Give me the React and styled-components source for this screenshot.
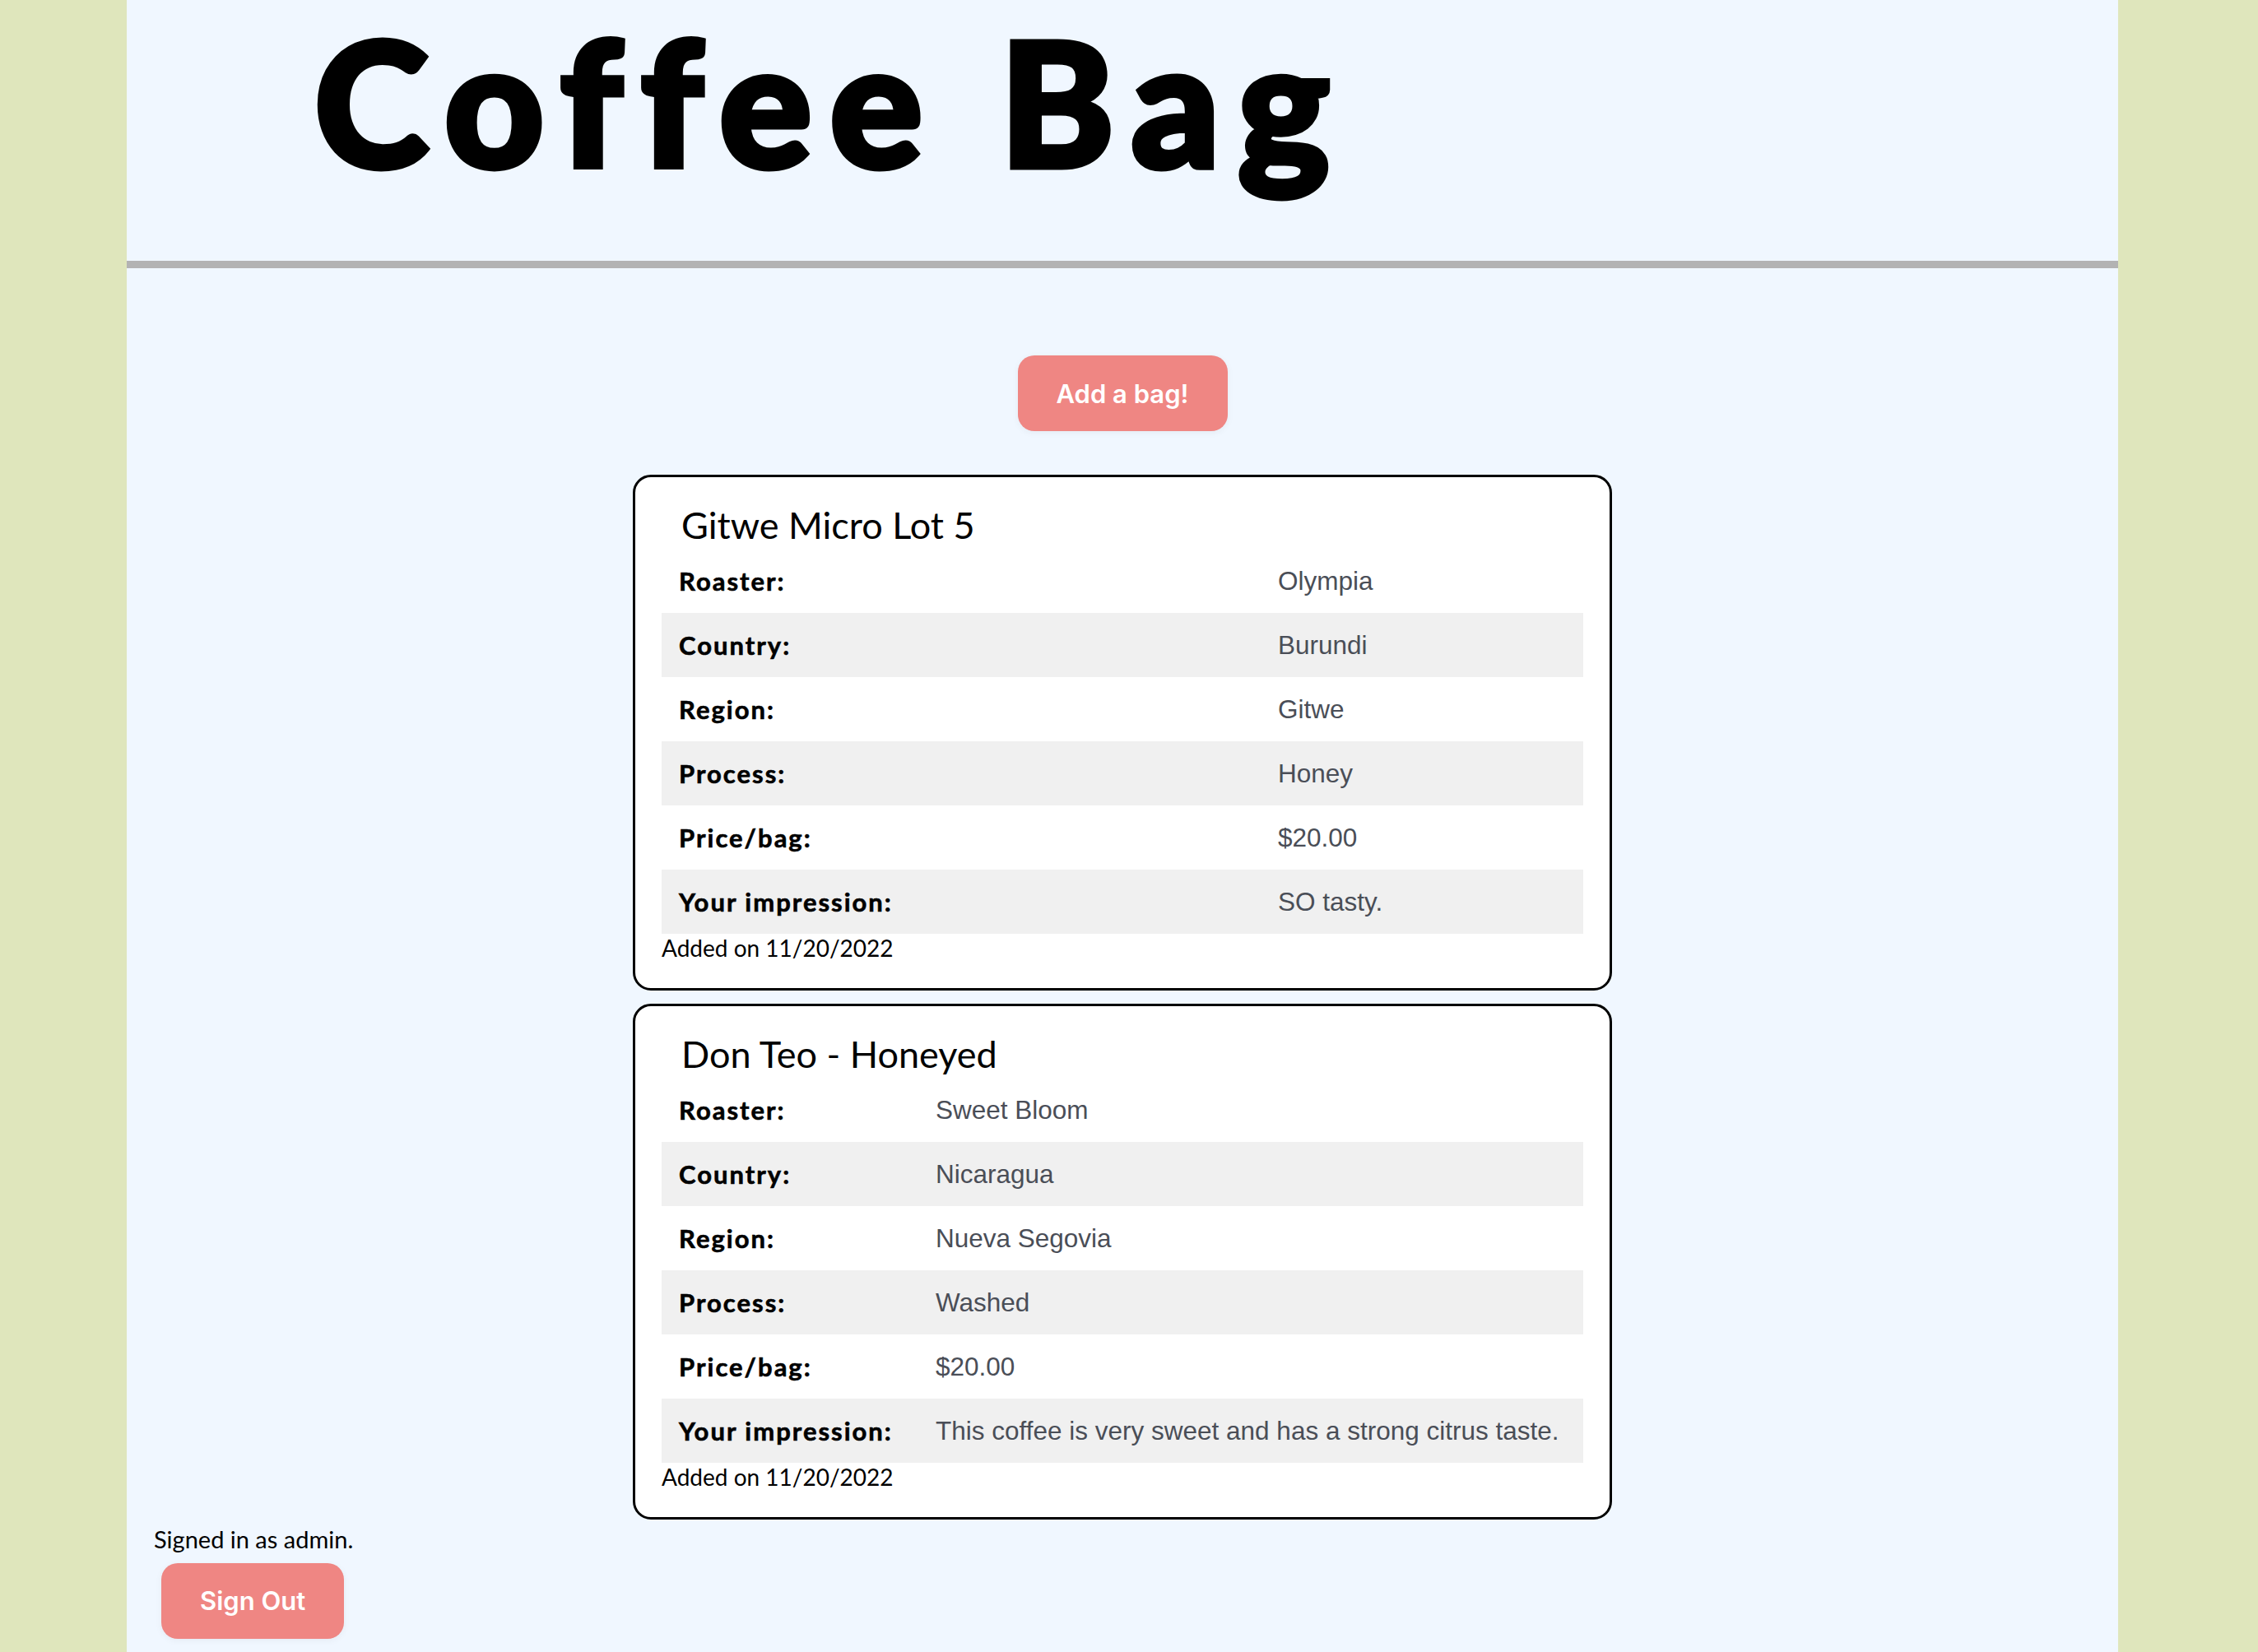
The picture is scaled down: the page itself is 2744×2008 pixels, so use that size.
import styled, { createGlobalStyle } from "styled-components";

const GlobalStyle = createGlobalStyle`
  html, body {
    margin: 0;
    padding: 0;
  }
  body {
    background-color: #dfe6bc;
    font-family: Lato, "Noto Sans", sans-serif;
    color: #000;
  }
`;

const StyledPage = styled.div`
  width: 2420px;
  min-height: 2008px;
  margin-left: 154px;
  background-color: #f0f7ff;
  display: flex;
  flex-direction: column;
`;

const StyledHeader = styled.header`
  height: 317px;
  border-bottom: 9px solid #b3b3b3;
  padding-left: 228px;
`;

const StyledTitle = styled.h1`
  margin: 0;
  padding-top: 17px;
  font-family: Lato, "DejaVu Sans", sans-serif;
  font-weight: 900;
  font-size: 210px;
  line-height: 1;
  letter-spacing: 22px;
  -webkit-text-stroke: 7px #000;
`;

const StyledMain = styled.main`
  display: flex;
  flex-direction: column;
  align-items: center;
  padding-top: 106px;
`;

const StyledButton = styled.button`
  all: unset;
  box-sizing: border-box;
  height: 92px;
  padding: 0 47px;
  border-radius: 20px;
  background-color: #ef8683;
  color: #fff;
  font-family: Inter, Roboto, sans-serif;
  font-weight: 600;
  font-size: 31px;
  display: inline-flex;
  align-items: center;
  justify-content: center;
  box-shadow: 0 2px 8px rgba(0, 0, 0, 0.05);
  cursor: pointer;
  ${(props) => props.$offset && `margin-left: ${props.$offset}px;`}
`;

const StyledBagList = styled.div`
  display: flex;
  flex-direction: column;
  gap: 16px;
  margin-top: 53px;
`;

const StyledCard = styled.article`
  box-sizing: border-box;
  width: 1190px;
  padding: 32px 32px 32px;
  border: 3px solid #000;
  border-radius: 22px;
  background-color: #fff;
`;

const StyledCardTitle = styled.h2`
  margin: 0 0 3px;
  padding-left: 24px;
  font-weight: 400;
  font-size: 45px;
  line-height: 52px;
`;

const StyledTable = styled.table`
  width: 100%;
  border-collapse: collapse;
  & tr:nth-child(even) {
    background-color: #f0f0f0;
  }
  & td {
    box-sizing: border-box;
    height: 78px;
    padding: 0 21px;
    vertical-align: middle;
    white-space: nowrap;
  }
  & td:first-child {
    width: ${(props) => props.$labelWidth}px;
    font-weight: 700;
    font-size: 31px;
    letter-spacing: 2px;
    -webkit-text-stroke: 0.6px #000;
  }
  & td:last-child {
    font-family: "Liberation Sans", Arial, sans-serif;
    font-size: 31.5px;
    color: #4a4e57;
  }
`;

const StyledAdded = styled.p`
  margin: 0;
  font-size: 28px;
  line-height: 34px;
`;

const StyledFooter = styled.footer`
  display: flex;
  flex-direction: column;
  align-items: flex-start;
  gap: 12px;
  padding: 7px 0 16px 33px;
  font-size: 29px;
  line-height: 34px;
`;

const bags = [
  {
    id: 1,
    name: "Gitwe Micro Lot 5",
    roaster: "Olympia",
    country: "Burundi",
    region: "Gitwe",
    process: "Honey",
    price: "$20.00",
    impression: "SO tasty.",
    added: "11/20/2022",
    labelWidth: 728,
  },
  {
    id: 2,
    name: "Don Teo - Honeyed",
    roaster: "Sweet Bloom",
    country: "Nicaragua",
    region: "Nueva Segovia",
    process: "Washed",
    price: "$20.00",
    impression: "This coffee is very sweet and has a strong citrus taste.",
    added: "11/20/2022",
    labelWidth: 312,
  },
];

function BagCard({ bag }) {
  const rows = [
    ["Roaster:", bag.roaster],
    ["Country:", bag.country],
    ["Region:", bag.region],
    ["Process:", bag.process],
    ["Price/bag:", bag.price],
    ["Your impression:", bag.impression],
  ];
  return (
    <StyledCard>
      <StyledCardTitle>{bag.name}</StyledCardTitle>
      <StyledTable $labelWidth={bag.labelWidth}>
        <tbody>
          {rows.map(([label, value]) => (
            <tr key={label}>
              <td>{label}</td>
              <td>{value}</td>
            </tr>
          ))}
        </tbody>
      </StyledTable>
      <StyledAdded>Added on {bag.added}</StyledAdded>
    </StyledCard>
  );
}

export default function App() {
  return (
    <>
      <GlobalStyle />
      <StyledPage>
        <StyledHeader>
          <StyledTitle>Coffee Bag</StyledTitle>
        </StyledHeader>
        <StyledMain>
          <StyledButton>Add a bag!</StyledButton>
          <StyledBagList>
            {bags.map((bag) => (
              <BagCard key={bag.id} bag={bag} />
            ))}
          </StyledBagList>
        </StyledMain>
        <StyledFooter>
          <span>Signed in as admin.</span>
          <StyledButton $offset={9}>Sign Out</StyledButton>
        </StyledFooter>
      </StyledPage>
    </>
  );
}
